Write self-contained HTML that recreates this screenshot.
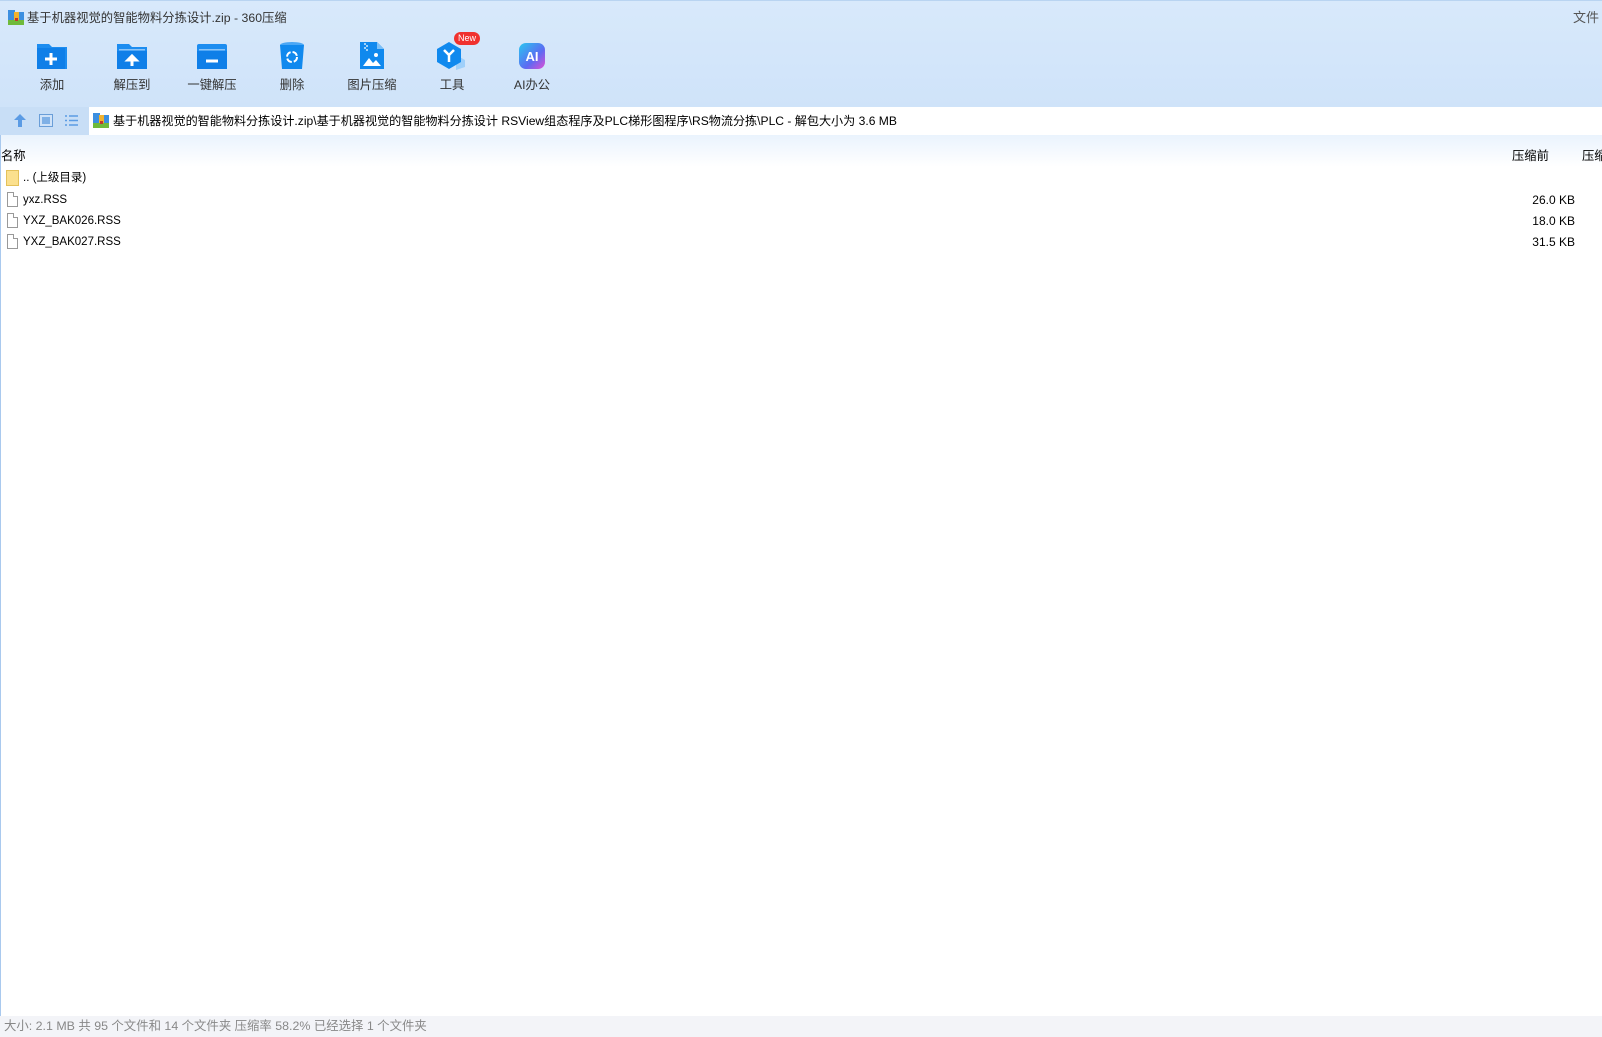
<!DOCTYPE html>
<html><head><meta charset="utf-8">
<style>
*{margin:0;padding:0;box-sizing:border-box}
body{width:1602px;height:1037px;overflow:hidden;background:#fff;font-family:"Liberation Sans","Noto Sans CJK SC",sans-serif;color:#000;position:relative}
.top{position:absolute;left:0;top:0;width:1602px;height:107px;background:linear-gradient(#d8e9fb,#cfe3f9);border-top:1px solid #b9d4f1}
.title{position:absolute;left:27px;top:7px;font-size:12.3px;color:#333;white-space:nowrap}
.file{position:absolute;left:1573px;top:6px;font-size:13px;color:#555}
.btn{position:absolute;top:40px;width:70px;text-align:center}
.btn .ic{height:29px;display:flex;align-items:center;justify-content:center}
.btn span{display:block;font-size:12.3px;color:#333;margin-top:5px;white-space:nowrap}
.addr{position:absolute;left:0;top:107px;width:1602px;height:28px;background:#c8def6}
.addr .box{position:absolute;left:89px;top:0;right:0;height:28px;background:#fff;font-size:12.1px;line-height:28px;padding-left:24px;white-space:nowrap}
.hdr{position:absolute;left:0;top:135px;width:1602px;height:32px;background:linear-gradient(#eaf3fd,#fff)}
.hdr span{position:absolute;top:11px;font-size:12.3px;white-space:nowrap}
.row{position:absolute;left:0;height:20px;width:1602px;font-size:11.5px;line-height:20px;white-space:nowrap}
.row .n{position:absolute;left:23px}
.row .s{position:absolute;right:27px;font-size:12px}
.doc{position:absolute;left:7px;top:2px;width:11px;height:15px;border:1px solid #999;background:#fff}
.doc:after{content:"";position:absolute;right:-1px;top:-1px;width:4px;height:4px;background:#fff;border-left:1px solid #999;border-bottom:1px solid #999}
.lb{position:absolute;left:0;top:135px;width:1px;height:881px;background:#a9c9ee}
.status{position:absolute;left:0;top:1016px;width:1602px;height:21px;background:#f3f4f8;font-size:12.4px;color:#888;line-height:21px;padding-left:4px;white-space:nowrap}
</style></head><body>
<div class="top">
<svg style="position:absolute;left:8px;top:9px" width="16" height="15" viewBox="0 0 16 15"><rect x="0" y="2" width="16" height="13" fill="#3c8fe0"/><rect x="0" y="0" width="7" height="3" fill="#3c8fe0"/><rect x="6" y="2" width="5" height="13" fill="#f2b22e"/><rect x="0" y="10" width="16" height="5" fill="#6fba3a"/><rect x="7" y="8" width="3" height="3" fill="#c0392b"/></svg>
<div class="title">基于机器视觉的智能物料分拣设计.zip - 360压缩</div>
<div class="file">文件</div>
<div class="btn" style="left:17px"><div class="ic"><svg width="32" height="27" viewBox="0 0 32 27"><path d="M1 2h12l3 3h15v22H1z" fill="#1c8df0"/><rect x="1" y="6" width="28" height="21" fill="#0f7fe8"/><path d="M15 11v12M9 17h12" stroke="#fff" stroke-width="3"/></svg></div><span>添加</span></div>
<div class="btn" style="left:97px"><div class="ic"><svg width="32" height="27" viewBox="0 0 32 27"><path d="M1 2h12l3 3h15v22H1z" fill="#1c8df0"/><rect x="1" y="9" width="30" height="18" fill="#0f7fe8"/><rect x="3" y="7" width="26" height="1.5" fill="#8cc4f7"/><path d="M16 24v-7M12 18l4-4 4 4z" stroke="#fff" stroke-width="3" fill="#fff"/></svg></div><span>解压到</span></div>
<div class="btn" style="left:177px"><div class="ic"><svg width="32" height="27" viewBox="0 0 32 27"><rect x="1" y="2" width="30" height="25" rx="2" fill="#1c8df0"/><rect x="1" y="9" width="30" height="18" fill="#0f7fe8"/><rect x="3" y="7" width="26" height="1.5" fill="#8cc4f7"/><path d="M10 19h12" stroke="#fff" stroke-width="3"/></svg></div><span>一键解压</span></div>
<div class="btn" style="left:257px"><div class="ic"><svg width="26" height="29" viewBox="0 0 26 29"><ellipse cx="13" cy="4" rx="12" ry="3" fill="#4aa7f5"/><path d="M1 4h24l-2 24H3z" fill="#1089ee"/><circle cx="13" cy="16" r="5" fill="none" stroke="#fff" stroke-width="2" stroke-dasharray="6 2"/></svg></div><span>删除</span></div>
<div class="btn" style="left:337px"><div class="ic"><svg width="26" height="29" viewBox="0 0 26 29"><path d="M1 1h17l7 7v20H1z" fill="#1089ee"/><path d="M18 1v7h7z" fill="#7cc0f7"/><path d="M5 2h2v2H5zM7 4h2v2H7zM5 6h2v2H5zM7 8h2v2H7z" fill="#9fd0fa"/><path d="M4 25l6-8 4 5 3-3 5 6z" fill="#fff"/><circle cx="17" cy="14" r="2" fill="#fff"/></svg></div><span>图片压缩</span></div>
<div class="btn" style="left:417px"><div class="ic"><svg width="32" height="29" viewBox="0 0 32 29"><path d="M20 14l9 5v7l-9 3z" fill="#9fd0fa"/><path d="M13 1l12 7v13l-12 7-12-7V8z" fill="#1089ee"/><path d="M8 9l5 5 5-5M13 14v7" stroke="#fff" stroke-width="2.5" fill="none"/></svg></div><span>工具</span></div>
<div style="position:absolute;left:454px;top:31px;width:26px;height:13px;border-radius:7px;background:#f0312e;color:#fff;font-size:9px;line-height:13px;text-align:center">New</div>
<div class="btn" style="left:497px"><div class="ic"><svg width="28" height="28" viewBox="0 0 28 28"><defs><linearGradient id="g" x1="0" y1="0" x2="1" y2="1"><stop offset="0" stop-color="#29c7f0"/><stop offset=".6" stop-color="#5d6af2"/><stop offset="1" stop-color="#e04fd5"/></linearGradient></defs><rect x="1" y="1" width="26" height="26" rx="7" fill="url(#g)"/><text x="14" y="19" font-size="13" font-weight="bold" fill="#fff" text-anchor="middle" font-family="Liberation Sans">AI</text></svg></div><span>AI办公</span></div>
</div>
<div class="addr">
<svg style="position:absolute;left:13px;top:6px" width="14" height="15" viewBox="0 0 14 15"><path d="M7 1l6 6H9v7H5V7H1z" fill="#5b9be4"/></svg>
<svg style="position:absolute;left:39px;top:7px" width="14" height="13" viewBox="0 0 14 13"><rect x=".5" y=".5" width="13" height="12" fill="#cfe2f8" stroke="#6a9ed8"/><rect x="3" y="3" width="8" height="7" fill="#7fb0e6"/></svg>
<svg style="position:absolute;left:64px;top:7px" width="14" height="13" viewBox="0 0 14 13"><path d="M1 2h2M1 6.5h2M1 11h2M5 2h9M5 6.5h9M5 11h9" stroke="#5b9be4" stroke-width="1.6"/></svg>
<div class="box"><svg style="position:absolute;left:4px;top:6px" width="16" height="15" viewBox="0 0 16 15"><rect x="0" y="2" width="16" height="13" fill="#3c8fe0"/><rect x="0" y="0" width="7" height="3" fill="#3c8fe0"/><rect x="6" y="2" width="5" height="13" fill="#f2b22e"/><rect x="0" y="10" width="16" height="5" fill="#6fba3a"/><rect x="7" y="8" width="3" height="3" fill="#c0392b"/></svg>基于机器视觉的智能物料分拣设计.zip\基于机器视觉的智能物料分拣设计 RSView组态程序及PLC梯形图程序\RS物流分拣\PLC - 解包大小为 3.6 MB</div>
</div>
<div class="hdr"><span style="left:1px">名称</span><span style="left:1512px">压缩前</span><span style="left:1582px">压缩</span></div>
<div class="lb"></div>
<div class="row" style="top:168px"><svg style="position:absolute;left:6px;top:2px" width="13" height="16" viewBox="0 0 13 16"><rect x=".5" y=".5" width="12" height="15" fill="#fbe08e" stroke="#e4c15a"/></svg><span class="n">.. (上级目录)</span></div>
<div class="row" style="top:190px"><div class="doc"></div><span class="n">yxz.RSS</span><span class="s">26.0 KB</span></div>
<div class="row" style="top:211px"><div class="doc"></div><span class="n">YXZ_BAK026.RSS</span><span class="s">18.0 KB</span></div>
<div class="row" style="top:232px"><div class="doc"></div><span class="n">YXZ_BAK027.RSS</span><span class="s">31.5 KB</span></div>
<div class="status">大小: 2.1 MB 共 95 个文件和 14 个文件夹 压缩率 58.2% 已经选择 1 个文件夹</div>
</body></html>
